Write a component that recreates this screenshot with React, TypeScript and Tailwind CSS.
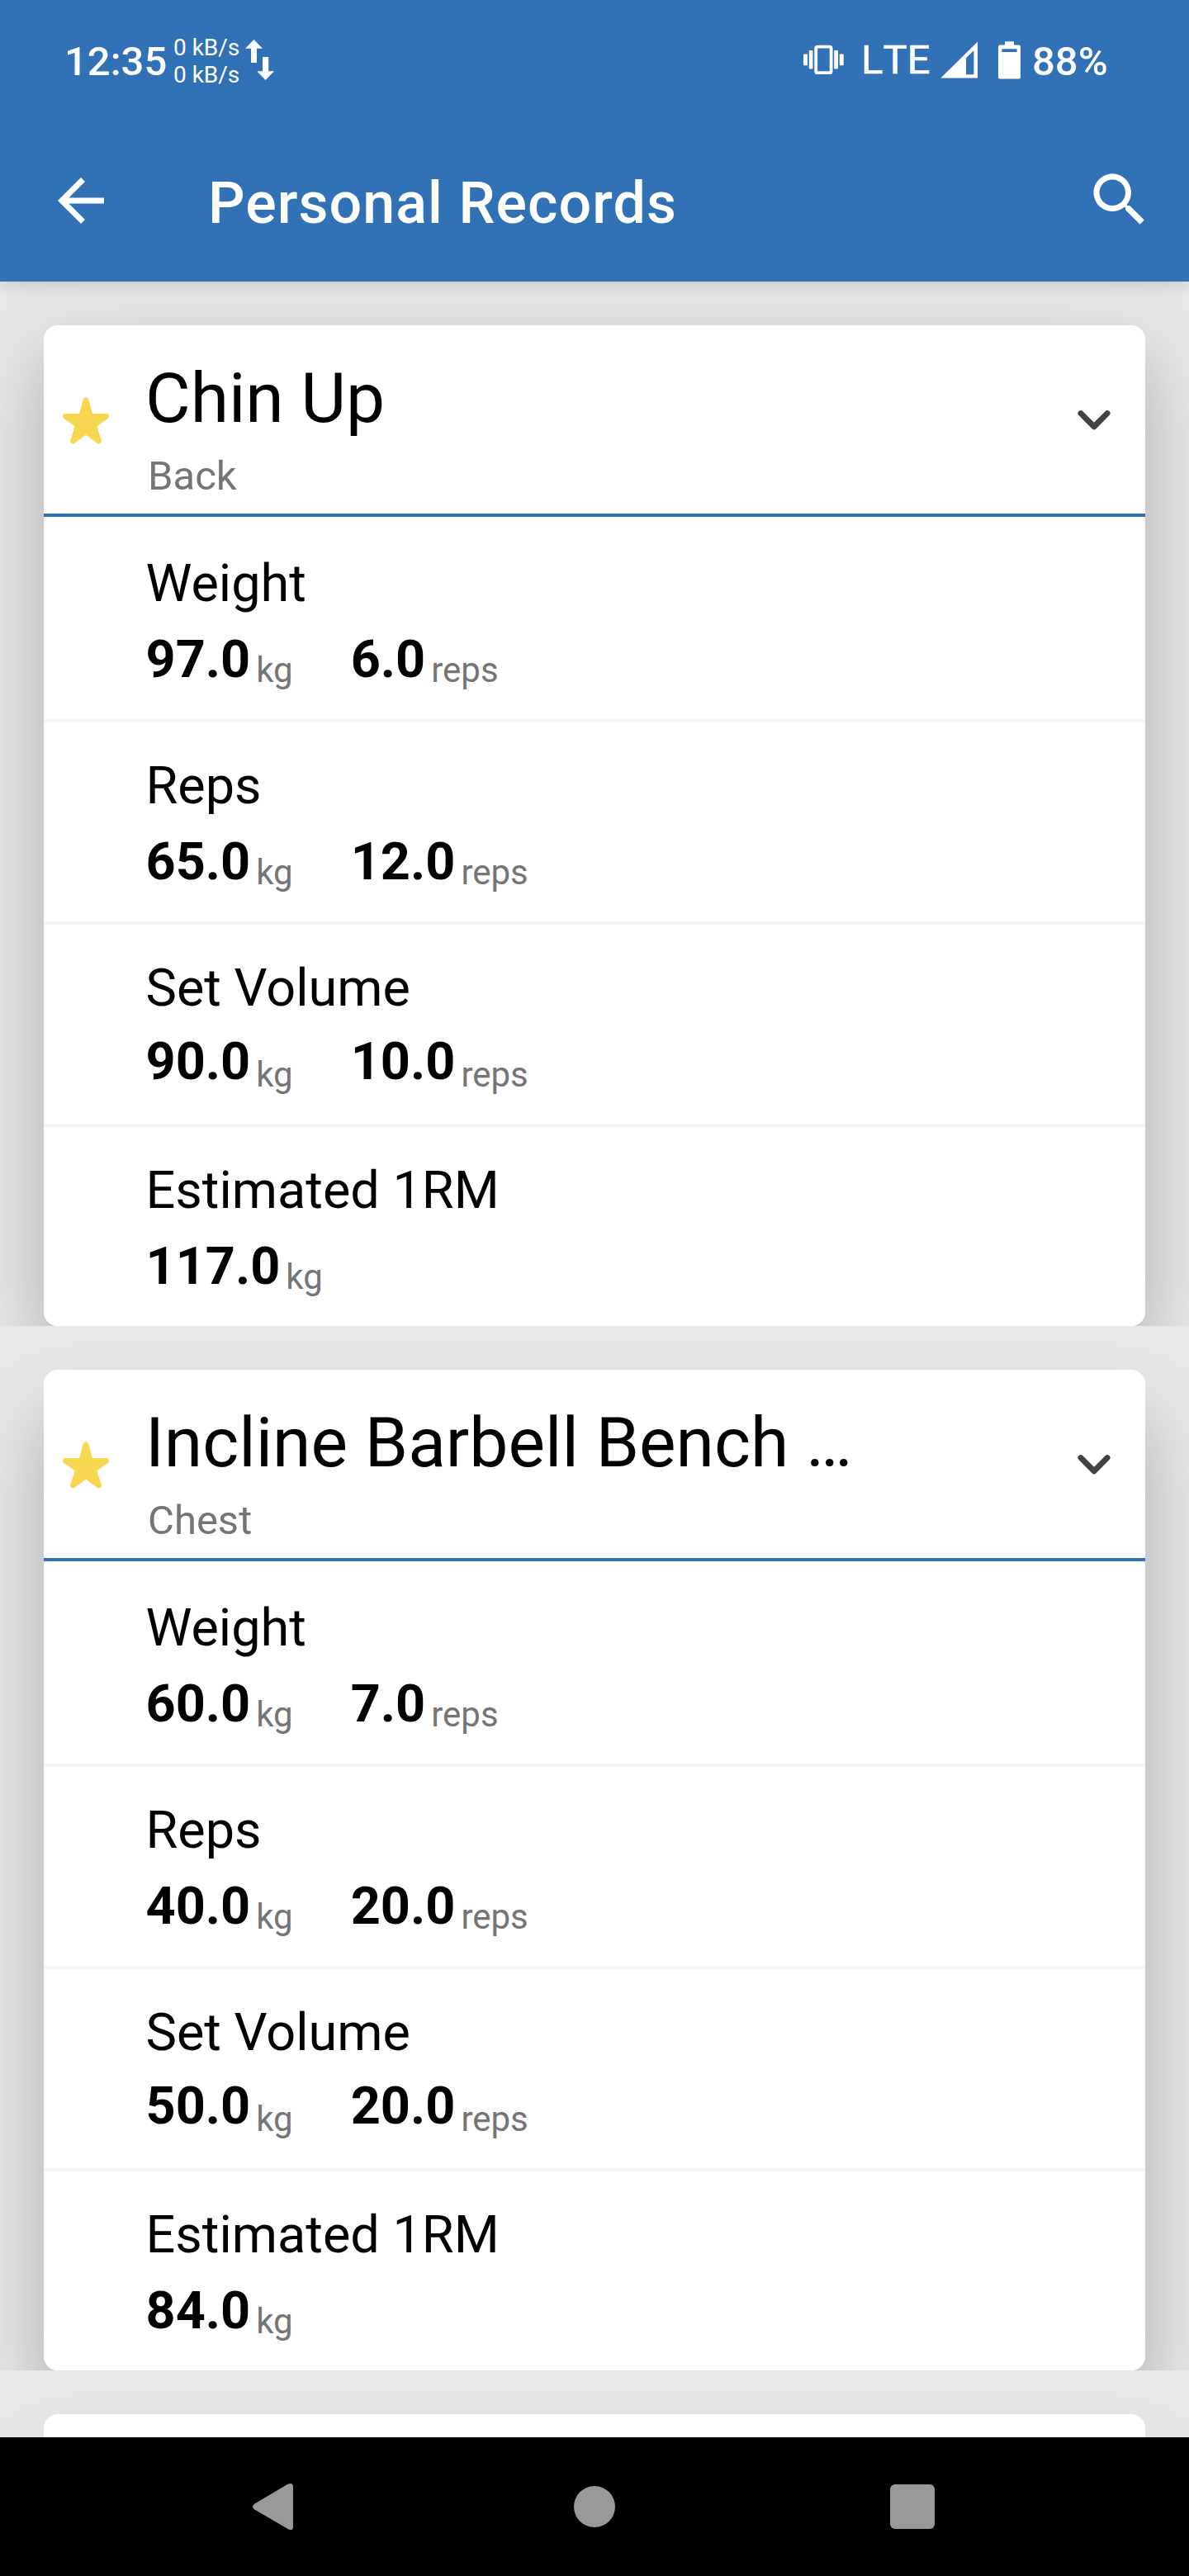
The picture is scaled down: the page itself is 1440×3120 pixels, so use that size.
type RecordRow = {
  label: string;
  weight: string;
  reps?: string;
  raised?: boolean;
};

type Exercise = {
  name: string;
  muscle: string;
  shadow: string;
  rows: RecordRow[];
};

const exercises: Exercise[] = [
  {
    name: "Chin Up",
    muscle: "Back",
    shadow: "shadow-[0_36px_90px_rgba(0,0,0,0.26)]",
    rows: [
      { label: "Weight", weight: "97.0", reps: "6.0" },
      { label: "Reps", weight: "65.0", reps: "12.0" },
      { label: "Set Volume", weight: "90.0", reps: "10.0", raised: true },
      { label: "Estimated 1RM", weight: "117.0" },
    ],
  },
  {
    name: "Incline Barbell Bench …",
    muscle: "Chest",
    shadow: "shadow-[0_57px_90px_rgba(0,0,0,0.26)]",
    rows: [
      { label: "Weight", weight: "60.0", reps: "7.0" },
      { label: "Reps", weight: "40.0", reps: "20.0" },
      { label: "Set Volume", weight: "50.0", reps: "20.0", raised: true },
      { label: "Estimated 1RM", weight: "84.0" },
    ],
  },
];

function StatusBar() {
  return (
    <div className="flex h-[146px] items-start text-white">
      <span className="ml-[78px] mt-[46px] w-[132px] text-[49px] leading-[58px] font-medium">12:35</span>
      <span className="mt-[41px] flex w-[84px] flex-col whitespace-nowrap text-[28px] leading-[33px]">
        <span>0 kB/s</span>
        <span>0 kB/s</span>
      </span>
      <svg className="ml-[3px] mt-[48px] h-[49px] w-[36px]" viewBox="0 0 36 49" fill="currentColor">
        <path d="M10.5 0L21 10.7H14V28H7V10.7H0z" />
        <path d="M21 21h7.2v17.3H35L24.6 49 14.3 38.3H21z" />
      </svg>
      <div className="ml-auto flex items-start">
        <svg className="mt-[54px] h-[37px] w-[50px]" viewBox="0 0 50 37" fill="currentColor">
          <rect x="15.2" y="2.6" width="18.4" height="31.6" rx="2" fill="none" stroke="currentColor" strokeWidth="3.8" />
          <rect x="0" y="11.6" width="5" height="13.6" rx="0.8" />
          <rect x="6.8" y="7" width="4.6" height="22.4" rx="0.8" />
          <rect x="37.2" y="7" width="4.8" height="22.4" rx="0.8" />
          <rect x="43.8" y="11.6" width="4.9" height="13.6" rx="0.8" />
        </svg>
        <span className="ml-[20px] mt-[44px] w-[90px] text-[49px] leading-[58px] [-webkit-text-stroke:0.6px_white] [font-kerning:none]">LTE</span>
        <svg className="ml-[6px] mt-[50px] h-[45px] w-[46px]" viewBox="0 0 46 45" fill="currentColor">
          <path fillRule="evenodd" d="M0.3 44.6L45 0.6V44.6zM31 20.3V40.2H40.4V11.2z" />
        </svg>
        <svg className="ml-[24px] mt-[50px] h-[46px] w-[27px]" viewBox="0 0 27 46" fill="currentColor">
          <path fillRule="evenodd" d="M8 0.3H19V4.4H25Q27 4.4 27 6.4V43.6Q27 45.6 25 45.6H2Q0 45.6 0 43.6V6.4Q0 4.4 2 4.4H8zM4.4 9.3V13H22.6V9.3z" />
        </svg>
        <span className="ml-[14px] mt-[46px] w-[190px] text-[49px] leading-[58px] font-medium">88%</span>
      </div>
    </div>
  );
}

function AppBar() {
  return (
    <div className="flex h-[195px] items-start text-white">
      <svg className="ml-[56px] mt-[55px] size-[84px]" viewBox="0 0 24 24" fill="currentColor">
        <path d="M20 11H7.83l5.59-5.59L12 4l-8 8 8 8 1.41-1.41L7.83 13H20v-2z" />
      </svg>
      <h1 className="ml-[112px] mt-[59px] whitespace-nowrap text-[70px] leading-[82px] font-medium tracking-[1.03px]">
        Personal Records
      </h1>
      <svg className="ml-auto mr-[42px] mt-[54px] size-[84px]" viewBox="0 0 24 24" fill="currentColor">
        <path d="M15.5 14h-.79l-.28-.27C15.41 12.59 16 11.11 16 9.5 16 5.91 13.09 3 9.5 3S3 5.91 3 9.5 5.91 16 9.5 16c1.61 0 3.09-.59 4.23-1.57l.27.28v.79l5 4.99L20.49 19l-4.99-5zm-6 0C7.01 14 5 11.99 5 9.5S7.01 5 9.5 5 14 7.01 14 9.5 11.99 14 9.5 14z" />
      </svg>
    </div>
  );
}

function Metric({ value, unit, raised }: { value: string; unit: string; raised?: boolean }) {
  return (
    <div className="flex h-[74px] items-start gap-[7px]">
      <span className={`text-[63px] leading-[74px] font-bold text-black ${raised ? "-mt-[3px]" : ""}`}>{value}</span>
      <span className="mt-[25px] text-[42px] leading-[50px] text-[#757575]">{unit}</span>
    </div>
  );
}

function ExerciseCard({ exercise }: { exercise: Exercise }) {
  return (
    <section className="h-[1265px] shrink-0 overflow-hidden px-[53px] pt-[53px]">
      <div className={`h-[1212px] overflow-hidden rounded-[17px] bg-white ${exercise.shadow}`}>
        <header className="flex h-[232px] items-start border-b-4 border-[#3172b6]">
          <svg className="ml-[23px] mt-[87px] h-[57px] w-[56px]" viewBox="0 0 56 57" fill="#f8d750">
            <path d="M20 20L24.7 3A3.4 3.4 0 0 1 31.3 3L36 20H52.8A3.3 3.3 0 0 1 54.6 26L41.3 35.3L46.7 52A3.3 3.3 0 0 1 41.6 55.7L28 45.7L14.4 55.7A3.3 3.3 0 0 1 9.3 52L14.7 35.3L1.4 26A3.3 3.3 0 0 1 3.2 20Z" />
          </svg>
          <div className="ml-[44px] flex flex-col pt-[40px]">
            <h2 className="whitespace-nowrap text-[84px] leading-[98px] text-black">{exercise.name}</h2>
            <p className="ml-[3px] mt-[16px] text-[49px] leading-[58px] text-[#757575]">{exercise.muscle}</p>
          </div>
          <svg className="ml-auto mr-[42px] mt-[102px] h-[26px] w-[40px]" viewBox="0 0 40 26" fill="none" stroke="#424242" strokeWidth="7" strokeLinecap="round" strokeLinejoin="round">
            <path d="M4 4.6L20 20.8L36 4.6" />
          </svg>
        </header>
        <div className="bg-[#efefef]">
          <div className="flex flex-col divide-y-4 divide-[#f5f5f5] rounded-t-[8px] bg-white pt-[4px]">
            {exercise.rows.map((row) => (
              <div key={row.label} className="flex h-[245px] flex-col pl-[123.5px] pt-[40px] last:h-[241px]">
                <span className="text-[63px] leading-[74px] text-black">{row.label}</span>
                <div className="mt-[18px] flex gap-[70px]">
                  <Metric value={row.weight} unit="kg" raised={row.raised} />
                  {row.reps && <Metric value={row.reps} unit="reps" raised={row.raised} />}
                </div>
              </div>
            ))}
          </div>
        </div>
      </div>
    </section>
  );
}

function NavigationBar() {
  return (
    <nav className="flex h-[168px] shrink-0 items-center bg-black">
      <svg className="ml-[305px] h-[58px] w-[51px]" viewBox="0 0 51 58" fill="#999999">
        <path d="M43.5 1.8Q50 -1 50 5V53Q50 59 44.5 56.5L3 32.3Q-1 29 3 25.7Z" />
      </svg>
      <span className="ml-[339px] size-[50px] rounded-full bg-[#999999]" />
      <span className="ml-[333px] size-[54px] rounded-[6px] bg-[#999999]" />
    </nav>
  );
}

export default function App() {
  return (
    <div className="flex h-[3120px] w-[1440px] flex-col overflow-hidden bg-[#e8e8e8] font-['Roboto',sans-serif]">
      <div className="relative z-10 h-[341px] shrink-0 bg-[#3172b6] shadow-[0_4px_20px_rgba(0,0,0,0.14)]">
        <StatusBar />
        <AppBar />
      </div>
      <main className="flex h-[2611px] flex-col overflow-hidden">
        {exercises.map((exercise) => (
          <ExerciseCard key={exercise.name} exercise={exercise} />
        ))}
        <section className="h-[81px] shrink-0 overflow-hidden px-[53px] pt-[53px]">
          <div className="h-[1212px] rounded-[17px] bg-white shadow-[0_64px_90px_rgba(0,0,0,0.26)]" />
        </section>
      </main>
      <NavigationBar />
    </div>
  );
}
